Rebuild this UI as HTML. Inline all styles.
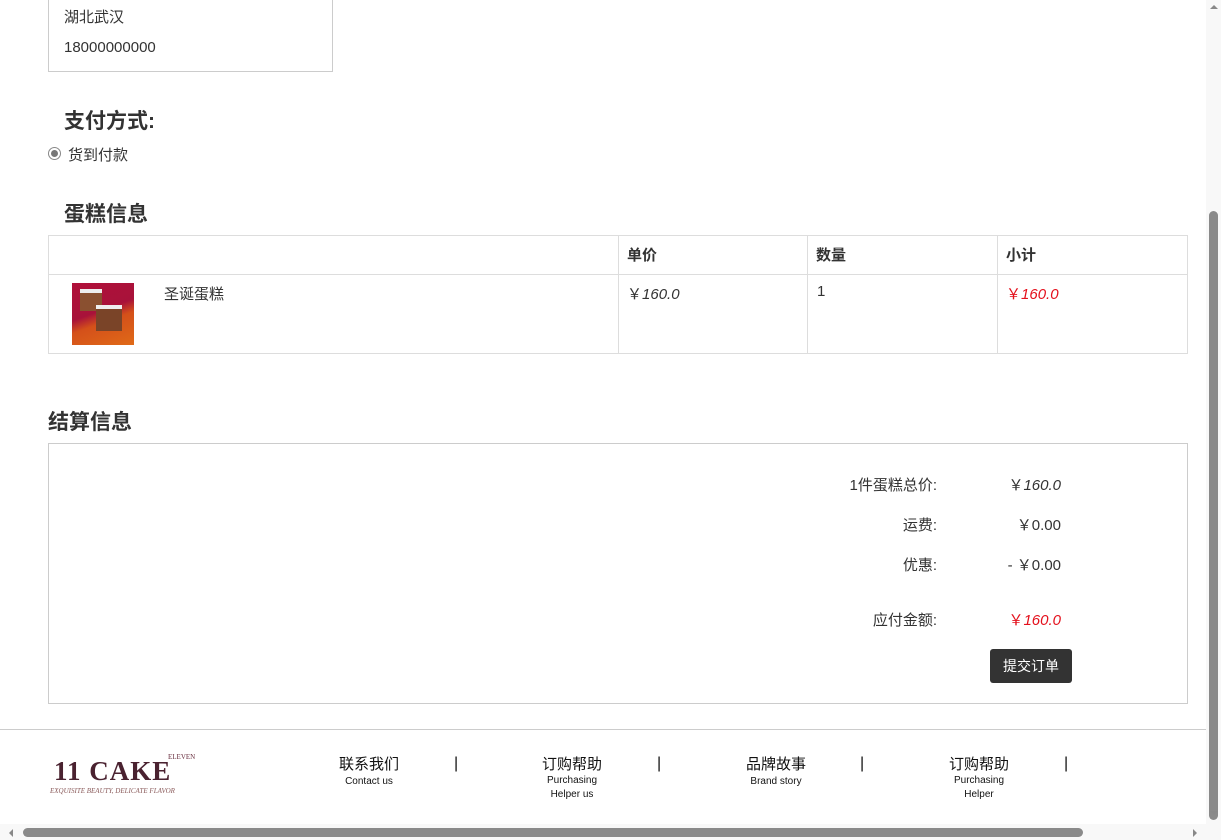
<!DOCTYPE html>
<html><head><meta charset="utf-8"><style>
*{margin:0;padding:0;box-sizing:border-box}
body{width:1221px;height:840px;overflow:hidden;position:relative;background:#fff;font-family:"Liberation Sans","Noto Sans CJK SC",sans-serif;color:#333;font-size:15px}
.a{position:absolute;white-space:nowrap}
.box{position:absolute;border:1px solid #ccc}
h3{position:absolute;font-size:21px;font-weight:bold;color:#333}
.it{font-style:italic}
.red{color:#e4101c}
</style></head><body>
<div class="box" style="left:48px;top:-10px;width:285px;height:82px;border-color:#ccc"></div>
<div class="a" style="left:64px;top:6px;font-size:15px">湖北武汉</div>
<div class="a" style="left:64px;top:39px;font-size:15px">18000000000</div>

<h3 style="left:64px;top:105px">支付方式:</h3>
<div class="a" style="left:48px;top:147px;width:13px;height:13px;border:1px solid #888;border-radius:50%;background:#fff"><div style="position:absolute;left:2px;top:2px;width:7px;height:7px;border-radius:50%;background:#777"></div></div>
<div class="a" style="left:68px;top:144px">货到付款</div>

<h3 style="left:64px;top:198px">蛋糕信息</h3>
<div class="box" style="left:48px;top:235px;width:1140px;height:119px;border-color:#ddd"></div>
<div class="a" style="left:48px;top:274px;width:1140px;height:1px;background:#ddd"></div>
<div class="a" style="left:618px;top:235px;width:1px;height:119px;background:#ddd"></div>
<div class="a" style="left:807px;top:235px;width:1px;height:119px;background:#ddd"></div>
<div class="a" style="left:997px;top:235px;width:1px;height:119px;background:#ddd"></div>
<div class="a" style="left:627px;top:244px;font-weight:bold">单价</div>
<div class="a" style="left:816px;top:244px;font-weight:bold">数量</div>
<div class="a" style="left:1006px;top:244px;font-weight:bold">小计</div>
<div class="a" style="left:72px;top:283px;width:62px;height:62px;background:linear-gradient(160deg,#b0103a 0%,#a8123a 45%,#d4501a 60%,#e06a18 100%)">
<div style="position:absolute;left:8px;top:6px;width:22px;height:22px;background:#8a5030;border-top:4px solid #eee"></div>
<div style="position:absolute;left:24px;top:22px;width:26px;height:26px;background:#7a4428;border-top:4px solid #eee"></div>
</div>
<div class="a" style="left:164px;top:283px">圣诞蛋糕</div>
<div class="a" style="left:627px;top:283px">￥<span class="it">160.0</span></div>
<div class="a" style="left:817px;top:283px">1</div>
<div class="a red" style="left:1006px;top:283px">￥<span class="it">160.0</span></div>

<h3 style="left:48px;top:406px">结算信息</h3>
<div class="box" style="left:48px;top:443px;width:1140px;height:261px"></div>
<div class="a" style="right:284px;top:474px">1件蛋糕总价:</div>
<div class="a" style="right:160px;top:474px">￥<span class="it">160.0</span></div>
<div class="a" style="right:284px;top:514px">运费:</div>
<div class="a" style="right:160px;top:514px">￥0.00</div>
<div class="a" style="right:284px;top:554px">优惠:</div>
<div class="a" style="right:160px;top:554px">- ￥0.00</div>
<div class="a" style="right:284px;top:609px">应付金额:</div>
<div class="a red" style="right:160px;top:609px">￥<span class="it">160.0</span></div>
<div class="a" style="left:990px;top:649px;width:82px;height:34px;background:#333;color:#fff;border-radius:3px;font-size:14px;text-align:center;line-height:34px">提交订单</div>

<div class="a" style="left:0;top:729px;width:1207px;height:1px;background:#ccc"></div>
<div class="a" style="left:54px;top:756px;font-family:'Liberation Serif',serif;font-size:27px;color:#4a2230;letter-spacing:1px;font-weight:bold">11 CAKE</div>
<div class="a" style="left:168px;top:753px;font-family:'Liberation Serif',serif;font-size:7px;color:#6a3040">ELEVEN</div>
<div class="a" style="left:50px;top:787px;font-family:'Liberation Serif',serif;font-size:7px;font-style:italic;color:#8a5a5a">EXQUISITE BEAUTY, DELICATE FLAVOR</div>

<div class="a" style="left:369px;top:753px;transform:translateX(-50%);text-align:center;color:#111"><div style="font-size:15px">联系我们</div><div style="font-size:10px;line-height:15px">Contact us</div></div>
<div class="a" style="left:572px;top:753px;transform:translateX(-50%);text-align:center;color:#111"><div style="font-size:15px">订购帮助</div><div style="font-size:10px;line-height:14px">Purchasing<br>Helper us</div></div>
<div class="a" style="left:776px;top:753px;transform:translateX(-50%);text-align:center;color:#111"><div style="font-size:15px">品牌故事</div><div style="font-size:10px;line-height:15px">Brand story</div></div>
<div class="a" style="left:979px;top:753px;transform:translateX(-50%);text-align:center;color:#111"><div style="font-size:15px">订购帮助</div><div style="font-size:10px;line-height:14px">Purchasing<br>Helper</div></div>
<div class="a" style="left:454px;top:755px;font-size:16px;color:#111">|</div>
<div class="a" style="left:657px;top:755px;font-size:16px;color:#111">|</div>
<div class="a" style="left:860px;top:755px;font-size:16px;color:#111">|</div>
<div class="a" style="left:1064px;top:755px;font-size:16px;color:#111">|</div>

<div class="a" style="left:1206px;top:0;width:15px;height:840px;background:#f8f8f8"></div>
<div class="a" style="left:1209px;top:211px;width:9px;height:609px;background:#8a8a8a;border-radius:5px"></div>
<div class="a" style="left:1210px;top:5px;width:0;height:0;border-left:4px solid transparent;border-right:4px solid transparent;border-bottom:4px solid #888"></div>
<div class="a" style="left:1210px;top:811px;width:0;height:0;border-left:4px solid transparent;border-right:4px solid transparent;border-top:4px solid #888"></div>
<div class="a" style="left:0;top:824px;width:1206px;height:16px;background:#f8f8f8"></div>
<div class="a" style="left:23px;top:828px;width:1060px;height:9px;background:#8a8a8a;border-radius:5px"></div>
<div class="a" style="left:9px;top:829px;width:0;height:0;border-top:4px solid transparent;border-bottom:4px solid transparent;border-right:4px solid #888"></div>
<div class="a" style="left:1193px;top:829px;width:0;height:0;border-top:4px solid transparent;border-bottom:4px solid transparent;border-left:4px solid #888"></div>
</body></html>
